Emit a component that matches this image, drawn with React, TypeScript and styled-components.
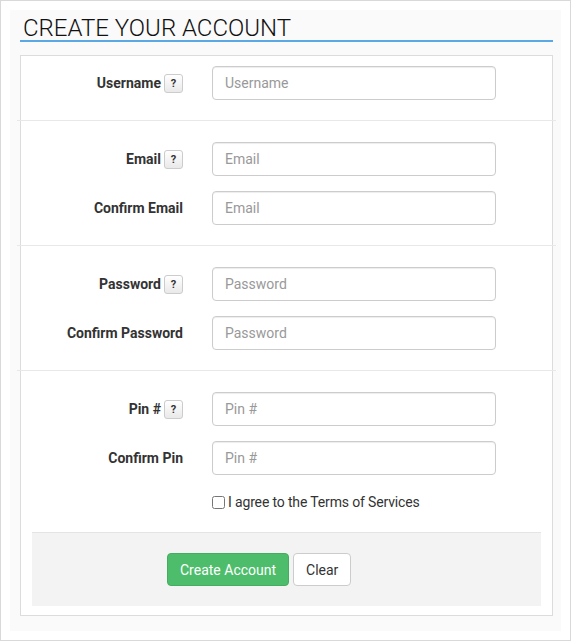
import styled, { createGlobalStyle } from 'styled-components'

const GlobalStyle = createGlobalStyle`
  body {
    margin: 0;
    font-family: Roboto, "Liberation Sans", sans-serif;
    color: #333;
  }
`

const Frame = styled.div`
  width: 571px;
  height: 641px;
  box-sizing: border-box;
  border: 1px solid #d9d9d9;
  padding: 9px;
  background: #fff;
`

const Panel = styled.div`
  height: 100%;
  box-sizing: border-box;
  background: #fafafa;
  padding: 0 8px 0 10px;
`

const Title = styled.h1`
  margin: 0;
  padding: 6px 0 0 3px;
  font-size: 24px;
  line-height: 24px;
  font-weight: 300;
  color: #111;
  border-bottom: 2px solid #5aa9e4;
`

const FormBox = styled.form`
  margin-top: 13px;
  background: #fff;
  border: 1px solid #dcdcdc;
  padding-bottom: 9px;
`

const Section = styled.div<{ $first?: boolean }>`
  display: flex;
  flex-direction: column;
  gap: 15px;
  padding: ${p => (p.$first ? '10px' : '21px')} 11px 20px;
`

const Divider = styled.hr`
  margin: 0 -4px;
  border: 0;
  border-top: 1px solid #e8e8e8;
  height: 0;
`

const Row = styled.div`
  display: grid;
  grid-template-columns: 151px 284px;
  column-gap: 29px;
  align-items: center;
`

const LabelCell = styled.div`
  display: flex;
  justify-content: flex-end;
  align-items: center;
  gap: 3px;
`

const Label = styled.label`
  font-size: 14px;
  font-weight: 700;
  color: #333;
`

const HelpButton = styled.button`
  width: 19px;
  height: 19px;
  padding: 0;
  border: 1px solid #ccc;
  border-radius: 3px;
  background: linear-gradient(#fff, #e9e9e9);
  font-family: Roboto, "Liberation Sans", sans-serif;
  font-size: 11px;
  font-weight: 700;
  color: #333;
  line-height: 17px;
`

const Input = styled.input`
  width: 284px;
  height: 34px;
  box-sizing: border-box;
  padding: 6px 12px;
  border: 1px solid #ccc;
  border-radius: 4px;
  box-shadow: inset 0 1px 1px rgba(0, 0, 0, 0.075);
  font-family: Roboto, "Liberation Sans", sans-serif;
  font-size: 14px;
  color: #555;

  &::placeholder {
    color: #999;
  }
`

const CheckRow = styled.label`
  grid-column: 2;
  display: flex;
  align-items: center;
  font-size: 14px;
  letter-spacing: -0.15px;
  color: #333;
  height: 20px;
  margin-top: 2px;

  input {
    margin: 0 3px 0 0;
    width: 13px;
    height: 13px;
  }
`

const Footer = styled.div`
  margin: 0 11px;
  background: #f3f3f3;
  border-top: 1px solid #e4e4e4;
  padding: 20px 0 20px 135px;
  display: flex;
  gap: 4px;
`

const Button = styled.button<{ $primary?: boolean }>`
  height: 33px;
  padding: 0 12px;
  border-radius: 4px;
  font-family: Roboto, "Liberation Sans", sans-serif;
  font-size: 14px;
  border: 1px solid ${p => (p.$primary ? '#45ad61' : '#ccc')};
  background: ${p => (p.$primary ? '#4dbd6b' : '#fff')};
  color: ${p => (p.$primary ? '#fff' : '#333')};
`

type Field = { label: string; placeholder: string; help?: boolean }

const groups: Field[][] = [
  [{ label: 'Username', placeholder: 'Username', help: true }],
  [
    { label: 'Email', placeholder: 'Email', help: true },
    { label: 'Confirm Email', placeholder: 'Email' },
  ],
  [
    { label: 'Password', placeholder: 'Password', help: true },
    { label: 'Confirm Password', placeholder: 'Password' },
  ],
  [
    { label: 'Pin #', placeholder: 'Pin #', help: true },
    { label: 'Confirm Pin', placeholder: 'Pin #' },
  ],
]

function FieldRow({ field }: { field: Field }) {
  return (
    <Row>
      <LabelCell>
        <Label>{field.label}</Label>
        {field.help && <HelpButton type="button">?</HelpButton>}
      </LabelCell>
      <Input placeholder={field.placeholder} />
    </Row>
  )
}

export default function App() {
  return (
    <>
      <GlobalStyle />
      <Frame>
        <Panel>
          <Title>CREATE YOUR ACCOUNT</Title>
          <FormBox>
            {groups.map((fields, i) => (
              <div key={i}>
                {i > 0 && <Divider />}
                <Section $first={i === 0}>
                  {fields.map(f => (
                    <FieldRow key={f.label} field={f} />
                  ))}
                  {i === groups.length - 1 && (
                    <Row>
                      <CheckRow>
                        <input type="checkbox" />I agree to the Terms of Services
                      </CheckRow>
                    </Row>
                  )}
                </Section>
              </div>
            ))}
            <Footer>
              <Button $primary type="button">Create Account</Button>
              <Button type="button">Clear</Button>
            </Footer>
          </FormBox>
        </Panel>
      </Frame>
    </>
  )
}
